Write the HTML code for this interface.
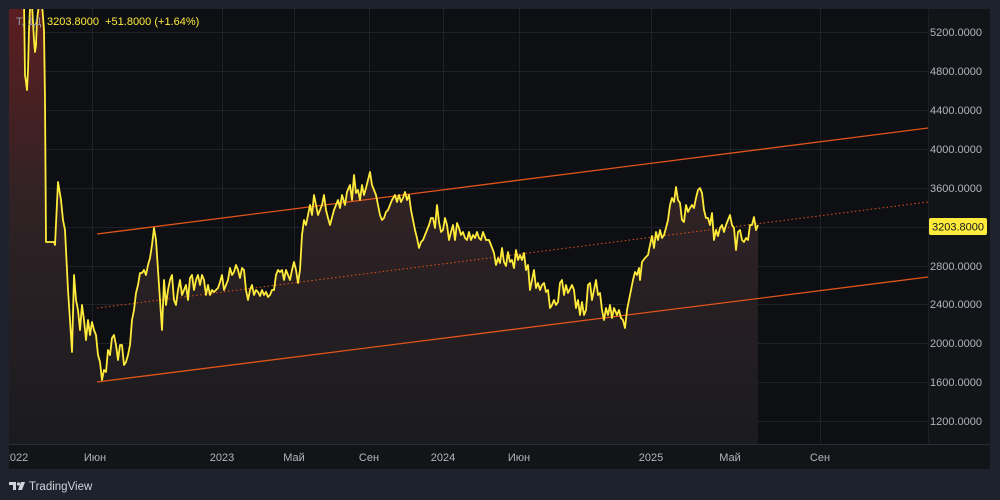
<!DOCTYPE html>
<html><head><meta charset="utf-8"><style>
html,body{margin:0;padding:0;background:#1e222d;width:1000px;height:500px;overflow:hidden;font-family:"Liberation Sans",sans-serif}
svg{position:absolute;left:0;top:0}
</style></head><body>
<svg width="1000" height="500" viewBox="0 0 1000 500" xmlns="http://www.w3.org/2000/svg">
<defs>
<linearGradient id="f" x1="0" y1="10" x2="0" y2="444" gradientUnits="userSpaceOnUse">
<stop offset="0" stop-color="#5c1e20"/><stop offset="0.45" stop-color="#2f2225"/><stop offset="1" stop-color="#1a1b1f"/>
</linearGradient>
<clipPath id="c"><rect x="9" y="9" width="919" height="435"/></clipPath>
</defs>
<rect x="9" y="9" width="981" height="460" fill="#131418"/>
<rect x="9" y="9" width="919" height="435" fill="#0e0f12"/>
<g stroke="#1f2126" stroke-width="1">
<line x1="9" x2="928" y1="32.5" y2="32.5"/><line x1="9" x2="928" y1="71.5" y2="71.5"/><line x1="9" x2="928" y1="110.5" y2="110.5"/><line x1="9" x2="928" y1="149.5" y2="149.5"/><line x1="9" x2="928" y1="188.5" y2="188.5"/><line x1="9" x2="928" y1="227.5" y2="227.5"/><line x1="9" x2="928" y1="266.5" y2="266.5"/><line x1="9" x2="928" y1="304.5" y2="304.5"/><line x1="9" x2="928" y1="343.5" y2="343.5"/><line x1="9" x2="928" y1="382.5" y2="382.5"/><line x1="9" x2="928" y1="421.5" y2="421.5"/>
<line y1="9" y2="444" x1="14.5" x2="14.5"/><line y1="9" y2="444" x1="92.5" x2="92.5"/><line y1="9" y2="444" x1="222.5" x2="222.5"/><line y1="9" y2="444" x1="294.5" x2="294.5"/><line y1="9" y2="444" x1="369.5" x2="369.5"/><line y1="9" y2="444" x1="443.5" x2="443.5"/><line y1="9" y2="444" x1="519.5" x2="519.5"/><line y1="9" y2="444" x1="651.5" x2="651.5"/><line y1="9" y2="444" x1="730.5" x2="730.5"/><line y1="9" y2="444" x1="820.5" x2="820.5"/>
</g>
<line x1="9" x2="990" y1="444.5" y2="444.5" stroke="#2a2e39"/>
<line x1="928.5" x2="928.5" y1="9" y2="444" stroke="#1c1e24"/>
<g clip-path="url(#c)">
<polygon id="fill" fill="url(#f)" points=""/>
<line x1="97" y1="308" x2="928" y2="202" stroke="#e0541a" stroke-width="1" stroke-dasharray="1.5,2.5"/>
<line x1="97" y1="234" x2="928" y2="128" stroke="#e0541a" stroke-width="1.3"/>
<line x1="97" y1="382" x2="928" y2="277" stroke="#e0541a" stroke-width="1.3"/>
<polyline id="pl" fill="none" stroke="#ffeb3b" stroke-width="1.8" stroke-linejoin="round" points="9,2 24,2 25,75 26,82 27,90 28,70 29,30 30,8 32,4 34,40 35,52 36,45 37,20 39,4 42,4 44,30 45,100 46,242 54,242 55,245 58,182 61,200 63,220 65,230 68,290 70,320 72,352 74,275 76,300 78,310 80,330 82,305 84,320 86,340 88,320 90,335 92,322 94,330 96,335 98,355 100,362 102,380 104,370 106,372 108,350 110,355 112,338 114,335 116,345 118,360 120,345 122,345 124,365 126,362 128,355 130,345 132,320 134,310 136,293 138,285 140,273 142,273 144,270 146,275 148,265 150,258 152,245 154,228 156,240 158,270 160,300 162,330 164,280 166,305 168,290 170,280 172,275 174,300 176,305 178,290 180,280 182,295 184,290 186,285 188,300 190,278 192,275 194,290 196,280 198,275 200,285 202,275 204,280 206,295 208,285 210,295 212,290 214,292 216,290 218,288 220,282 222,275 224,290 226,285 228,280 230,268 232,275 234,272 236,265 238,270 240,278 242,268 244,270 246,290 248,300 250,290 252,285 254,295 256,290 258,292 260,296 262,290 264,295 266,292 268,297 270,295 272,290 274,290 276,275 278,270 280,272 282,270 284,280 286,270 288,275 290,280 292,270 294,262 296,270 298,283 300,270 302,235 304,220 306,225 308,215 310,205 312,215 314,195 316,205 318,215 320,210 322,205 324,195 326,210 328,218 330,225 334,210 338,200 340,208 342,195 345,205 347,192 350,185 352,200 354,175 356,193 358,190 360,200 362,185 364,195 366,188 368,180 370,172 372,185 374,190 376,195 378,205 380,215 382,220 384,218 386,212 388,210 390,205 392,200 395,195 397,202 399,195 401,202 403,198 405,192 407,200 409,195 411,210 413,220 415,230 417,238 419,248 421,242 423,240 425,235 427,230 429,225 431,218 433,218 435,228 437,205 439,222 441,232 443,230 445,218 447,225 449,240 451,232 453,225 455,240 457,223 459,228 461,235 463,232 465,238 467,240 469,232 471,240 473,235 475,238 477,232 479,238 481,240 483,232 486,240 489,240 491,245 494,253 496,265 498,258 500,263 502,248 504,262 506,266 508,252 510,262 512,260 514,268 516,250 518,260 520,255 522,260 524,253 526,270 528,265 530,290 532,280 534,270 536,288 538,283 540,290 542,285 544,283 546,292 548,290 550,308 552,305 554,300 556,305 558,302 560,283 562,280 564,295 566,285 568,293 570,289 572,285 574,290 576,308 578,300 580,315 582,302 584,315 586,310 588,285 590,283 592,300 594,290 596,280 598,295 600,293 602,310 604,320 606,308 608,315 610,305 612,318 614,308 617,315 619,310 621,318 623,320 625,328 627,310 629,300 631,290 633,280 635,272 637,275 639,268 640,280 642,262 645,258 648,255 650,245 652,236 654,248 656,232 658,240 660,230 662,238 664,235 666,228 668,220 670,205 672,198 674,202 676,187 678,200 680,203 682,220 684,222 686,205 688,212 690,208 692,205 694,208 696,198 698,190 700,188 702,193 704,210 706,218 708,218 710,225 712,213 714,240 716,230 718,236 720,228 722,225 724,232 726,225 728,220 730,215 732,225 734,228 736,250 738,232 740,230 742,240 744,242 746,238 748,240 750,225 752,225 754,217 756,230 758,225"/>
</g>
<g fill="#b2b5be" font-size="11" text-anchor="end">
<text x="982" y="36">5200.0000</text><text x="982" y="75">4800.0000</text><text x="982" y="114">4400.0000</text><text x="982" y="153">4000.0000</text><text x="982" y="192">3600.0000</text><text x="982" y="270">2800.0000</text><text x="982" y="308">2400.0000</text><text x="982" y="347">2000.0000</text><text x="982" y="386">1600.0000</text><text x="982" y="425">1200.0000</text>
</g>
<rect x="929" y="218" width="58" height="17" rx="2" fill="#ffeb3b"/>
<text x="958" y="230.5" font-size="11" fill="#131722" text-anchor="middle">3203.8000</text>
<g fill="#b2b5be" font-size="11" text-anchor="middle">
<text x="16" y="461">2022</text><text x="95" y="461">Июн</text><text x="222" y="461">2023</text><text x="294" y="461">Май</text><text x="369" y="461">Сен</text><text x="443" y="461">2024</text><text x="519" y="461">Июн</text><text x="651" y="461">2025</text><text x="730" y="461">Май</text><text x="820" y="461">Сен</text>
</g>
<rect x="0" y="444" width="9" height="56" fill="#1e222d"/>
<text x="16" y="25" font-size="11" fill="#9598a1">T, 1Д</text>
<text x="47" y="25" font-size="11" fill="#ffeb3b">3203.8000 &#160;+51.8000 (+1.64%)</text>
<g fill="#d1d4dc"><path d="M9 482h7v8h-3v-5h-4z"/><circle cx="18.5" cy="484" r="1.6"/><path d="M21 482h4l-3 8h-4z"/></g>
<text x="29" y="490" font-size="11.5" fill="#d1d4dc">TradingView</text>
</svg>
<script>
var p=document.getElementById('pl').getAttribute('points').trim();
document.getElementById('fill').setAttribute('points',p+' 758,444 9,444');
</script>
</body></html>
